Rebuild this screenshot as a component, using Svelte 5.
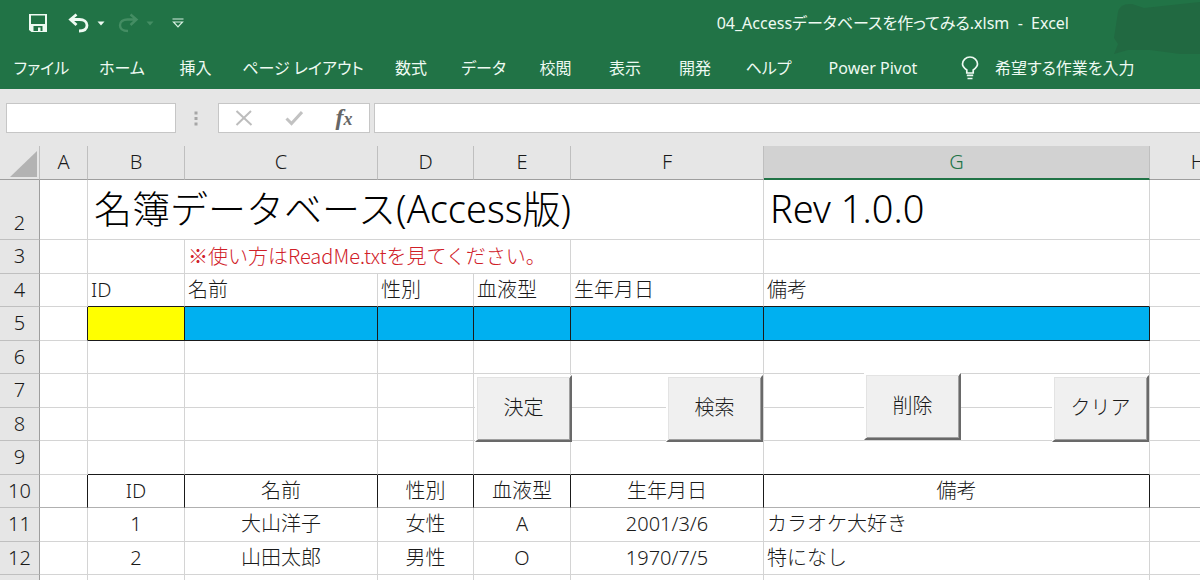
<script>
  const tabs = [
    { label: 'ファイル', width: 83 },
    { label: 'ホーム', width: 78 },
    { label: '挿入', width: 69 },
    { label: 'ページ レイアウト', width: 146 },
    { label: '数式', width: 70 },
    { label: 'データ', width: 75 },
    { label: '校閲', width: 69 },
    { label: '表示', width: 70 },
    { label: '開発', width: 70 },
    { label: 'ヘルプ', width: 77 },
    { label: 'Power Pivot', width: 132 }
  ]

  const columns = [
    { name: 'A', width: 48 },
    { name: 'B', width: 97 },
    { name: 'C', width: 193 },
    { name: 'D', width: 96 },
    { name: 'E', width: 97 },
    { name: 'F', width: 193 },
    { name: 'G', width: 386, selected: true },
    { name: 'H' }
  ]

  const fields = ['ID', '名前', '性別', '血液型', '生年月日', '備考']

  const records = [
    { row: 11, values: ['1', '大山洋子', '女性', 'A', '2001/3/6', 'カラオケ大好き'] },
    { row: 12, values: ['2', '山田太郎', '男性', 'O', '1970/7/5', '特になし'] }
  ]

  // form buttons float over the grid
  const buttons = [
    { label: '決定', x: 475, y: 229 },
    { label: '検索', x: 666, y: 229 },
    { label: '削除', x: 864, y: 227 },
    { label: 'クリア', x: 1052, y: 229 }
  ]
</script>

<div class="excel">
  <header class="top">
    <svg class="smudge" viewBox="0 0 90 60" aria-hidden="true">
      <path d="M8 12 Q10 3 22 4 L34 8 L90 2 V54 L70 54 L40 50 L18 50 L4 54 L8 44 L4 38 Z" />
    </svg>
    <div class="titlebar">
      <div class="quick">
        <button class="tool save" aria-label="上書き保存">
          <svg width="20" height="20" viewBox="0 0 20 20">
            <path d="M1 1h18v18H3.500L1 17z" fill="#eefaf2" />
            <path d="M3 2.500h14v8.500H3zM5.500 13h9v5h-2v-3.500h-2.500V18H5.500z" fill="#217346" />
          </svg>
        </button>
        <button class="tool" aria-label="元に戻す">
          <svg width="22" height="20" viewBox="0 0 22 20" fill="none" stroke="#eefaf2" stroke-width="2.800">
            <path d="M8.500 1.500L2.500 6.500l6 5.500M3 6.500h8.500c4.500 0 7.500 2.200 7.500 5.800s-3 5.700-8 5.700" />
          </svg>
        </button>
        <button class="tool caret" aria-label="元に戻す一覧">
          <svg width="8" height="5" viewBox="0 0 8 5"><path d="M0.500 0.500h7L4 4.500z" fill="#eefaf2" /></svg>
        </button>
        <button class="tool" aria-label="やり直し">
          <svg width="22" height="20" viewBox="0 0 22 20" fill="none" stroke="#448d63" stroke-width="2.400">
            <path d="M13.500 1.500l6 5-6 5.500M19 6.500h-8.500C6 6.500 3 8.700 3 12.300S6 18 11 18" />
          </svg>
        </button>
        <button class="tool caret" aria-label="やり直し一覧">
          <svg width="8" height="5" viewBox="0 0 8 5"><path d="M0.500 0.500h7L4 4.500z" fill="#448d63" /></svg>
        </button>
        <button class="tool more" aria-label="クイック アクセス ツール バーのカスタマイズ">
          <svg width="12" height="10" viewBox="0 0 12 10" fill="none" stroke="#d5eedf" stroke-width="1.200">
            <path d="M0.500 1h11M1.500 4h9L6 8.800z" />
          </svg>
        </button>
      </div>
      <h1 class="filename">04_Accessデータベースを作ってみる.xlsm &nbsp;- &nbsp;Excel</h1>
    </div>

    <nav class="ribbon">
      {#each tabs as tab}
        <button class="tab" style="width: {tab.width}px">{tab.label}</button>
      {/each}
      <button class="tab tell">
        <svg width="18" height="24" viewBox="0 0 18 24" fill="none" stroke="#eefaf2" stroke-width="1.700">
          <path d="M5.800 17v-3C3 12 1.500 10.500 1.500 8a7.500 7 0 0 1 15 0c0 2.500-1.500 4-4.300 6v3z" />
          <path d="M5.800 19.300h6.400M6.500 22.500h5" />
        </svg>
        希望する作業を入力
      </button>
    </nav>
  </header>

  <div class="formula-bar">
    <input class="name-box" aria-label="名前ボックス" />
    <svg class="grip" width="4" height="15" viewBox="0 0 4 15" fill="#a6a6a6">
      <path d="M0.500 0.500h3v3h-3zM0.500 6h3v3h-3zM0.500 11.500h3v3h-3z" />
    </svg>
    <div class="fx-box">
      <button class="fx-tool" aria-label="キャンセル">
        <svg width="18" height="16" viewBox="0 0 18 16" fill="none" stroke="#bdbdbd" stroke-width="2">
          <path d="M1.500 1l15 14M16 1L1.500 15" />
        </svg>
      </button>
      <button class="fx-tool" aria-label="入力">
        <svg width="18" height="16" viewBox="0 0 18 16" fill="none" stroke="#c2c2c2" stroke-width="3">
          <path d="M1.500 8.500l5 5L17 2" />
        </svg>
      </button>
      <button class="fx-tool fx" aria-label="関数の挿入">f<span class="sub-x">x</span></button>
    </div>
    <input class="formula" aria-label="数式バー" />
  </div>

  <main class="sheet">
    <table>
      <colgroup>
        <col style="width: 40px" />
        {#each columns as c}
          <col style={c.width ? `width: ${c.width}px` : undefined} />
        {/each}
      </colgroup>
      <thead>
        <tr>
          <th class="corner">
            <svg width="27" height="26" viewBox="0 0 27 26"><path d="M27 0v26H0z" fill="#b3b3b3" /></svg>
          </th>
          {#each columns as c}
            <th class:selected={c.selected} scope="col">{c.name}</th>
          {/each}
        </tr>
      </thead>
      <tbody>
        <tr class="title-row">
          <th scope="row">2</th>
          <td></td>
          <td class="title" colspan="5">名簿データベース(Access版)</td>
          <td class="title">Rev 1.0.0</td>
          <td></td>
        </tr>
        <tr>
          <th scope="row">3</th>
          <td></td>
          <td></td>
          <td class="note" colspan="3">※使い方はReadMe.txtを見てください。</td>
          <td></td>
          <td></td>
          <td></td>
        </tr>
        <tr class="above-box">
          <th scope="row">4</th>
          <td></td>
          {#each fields as field, i}
            <td class="boxed" id="field-{i}">{field}</td>
          {/each}
          <td></td>
        </tr>
        <tr class="entry">
          <th scope="row">5</th>
          <td class="before-box"></td>
          {#each fields as _, i}
            <td class="cell" class:key={i === 0}><input aria-labelledby="field-{i}" /></td>
          {/each}
          <td></td>
        </tr>
        {#each [6, 7, 8, 9] as row}
          <tr class:above-box={row === 9}>
            <th scope="row">{row}</th>
            <td></td>
            {#each fields as _}
              <td class="boxed"></td>
            {/each}
            <td></td>
          </tr>
        {/each}
        <tr class="list-head">
          <th scope="row">10</th>
          <td class="before-box"></td>
          {#each fields as field}
            <td class="cell">{field}</td>
          {/each}
          <td></td>
        </tr>
        {#each records as record}
          <tr class="record">
            <th scope="row">{record.row}</th>
            <td></td>
            {#each record.values as value}
              <td>{value}</td>
            {/each}
            <td></td>
          </tr>
        {/each}
        <tr>
          <th></th>
          {#each columns as _}
            <td></td>
          {/each}
        </tr>
      </tbody>
    </table>

    {#each buttons as b}
      <button class="form-button" style="left: {b.x}px; top: {b.y}px">{b.label}</button>
    {/each}
  </main>
</div>

<style>
  :global(body) {
    margin: 0;
    background: #fff;
  }

  .excel {
    display: flex;
    flex-direction: column;
    height: 100vh;
    overflow: hidden;
    font-family: 'Noto Sans', 'Noto Sans CJK JP', sans-serif;
    font-weight: 300;
    color: #1a1a1a;
    background: #e6e6e6;
  }

  button,
  input {
    font: inherit;
    color: inherit;
    padding: 0;
    border: 0;
    background: none;
    box-sizing: border-box;
  }

  /* Title bar and ribbon */
  .top {
    position: relative;
    background: #217346;
    color: #eefaf2;
    font-weight: 400;
    font-feature-settings: 'palt';
  }

  .smudge {
    position: absolute;
    top: 0;
    right: 0;
    width: 90px;
    height: 60px;
    fill: #216941;
  }

  .titlebar {
    position: relative;
    display: flex;
    align-items: center;
    justify-content: space-between;
    height: 46px;
    padding: 0 131px 0 28px;
  }

  .quick {
    display: flex;
    align-items: center;
  }

  .tool {
    display: flex;
  }
  .save {
    margin-right: 20px;
  }
  .caret {
    margin: 0 12px 0 7px;
  }
  .more {
    margin-left: 6px;
  }

  .filename {
    margin: 0;
    font-size: 16px;
    line-height: 20px;
    font-weight: 400;
    white-space: pre;
  }

  .ribbon {
    display: flex;
    align-items: center;
    height: 43px;
  }

  .tab {
    flex-shrink: 0;
    font-size: 16px;
    line-height: 24px;
    text-align: center;
    white-space: nowrap;
  }

  .tell {
    display: flex;
    align-items: center;
    gap: 16px;
    margin-left: 22px;
  }

  /* Formula bar */
  .formula-bar {
    display: flex;
    align-items: center;
    height: 30px;
    padding: 14px 0 13px 6px;
  }

  .name-box,
  .fx-box,
  .formula {
    height: 30px;
    border: 1px solid #c6c6c6;
    background: #fff;
    box-sizing: border-box;
  }
  .name-box {
    width: 170px;
  }
  .grip {
    margin: 0 20px 0 18px;
  }
  .fx-box {
    display: flex;
    align-items: center;
    justify-content: space-around;
    width: 152px;
    margin-right: 4px;
  }
  .fx-tool {
    display: flex;
    align-items: center;
    justify-content: center;
    width: 50px;
  }
  .formula {
    flex: 1;
    min-width: 0;
    border-right: 0;
  }

  .fx {
    align-items: baseline;
    font: italic 700 24px/28px 'Liberation Serif', serif;
    color: #666;
  }
  .sub-x {
    font-size: 18px;
  }

  /* Grid */
  .sheet {
    flex: 1;
    min-height: 0;
    position: relative;
    overflow: hidden;
    background: #fff;
  }

  table {
    width: 100%;
    min-width: 1247px;
    table-layout: fixed;
    border-spacing: 0;
    font-size: 20px;
    line-height: 24px;
  }

  th,
  td {
    height: 33px;
    padding: 0 0 1px;
    border: 0 solid #d4d4d4;
    border-width: 0 1px 1px 0;
    box-sizing: border-box;
    white-space: nowrap;
  }
  tbody tr:nth-child(even) > * {
    height: 34px;
  }

  th {
    font-weight: 300;
    background: #e6e6e6;
    border-color: #bfbfbf;
  }
  tbody th {
    border-right-color: #9e9e9e;
  }
  thead th {
    height: 34px;
    border-bottom-color: #9e9e9e;
  }
  thead .selected {
    background: #d2d2d2;
    color: #217346;
    border-bottom: 2px solid #217346;
  }
  .corner svg {
    display: block;
    margin: 3px 0 0 10px;
  }

  td {
    padding-left: 3px;
  }

  tbody .title-row > * {
    height: 60px;
  }
  .title-row th {
    vertical-align: bottom;
    padding-bottom: 4px;
  }
  .title-row .title {
    padding: 0 0 3px 6px;
    font-size: 38px;
    line-height: 48px;
    color: #000;
  }

  .note {
    font-family: 'Noto Sans CJK JP', sans-serif;
    color: #d02028;
  }

  .above-box .boxed {
    border-bottom-color: #1a1a1a;
  }
  .before-box {
    border-right-color: #1a1a1a;
  }
  .cell {
    border-right-color: #1a1a1a;
  }

  .entry .cell {
    padding: 0;
    border-bottom-color: #1a1a1a;
    background: #00b0f0;
  }
  .entry .key {
    background: #ffff00;
  }
  .entry input {
    display: block;
    width: 100%;
    height: 30px;
    padding: 0 3px;
  }

  .list-head td {
    padding-left: 0;
    text-align: center;
    border-bottom-color: #b0b0b0;
  }

  .record td {
    padding-left: 0;
    text-align: center;
  }
  .record td:nth-last-child(2) {
    padding-left: 3px;
    text-align: left;
  }

  .form-button {
    position: absolute;
    width: 97px;
    height: 67px;
    padding-bottom: 4px;
    background: #f0f0f0;
    border: 2px solid;
    border-color: #fff #696969 #696969 #fff;
    box-shadow: inset 1px 1px #e3e3e3, inset -1px -1px #a0a0a0;
    font-size: 20px;
  }
</style>
